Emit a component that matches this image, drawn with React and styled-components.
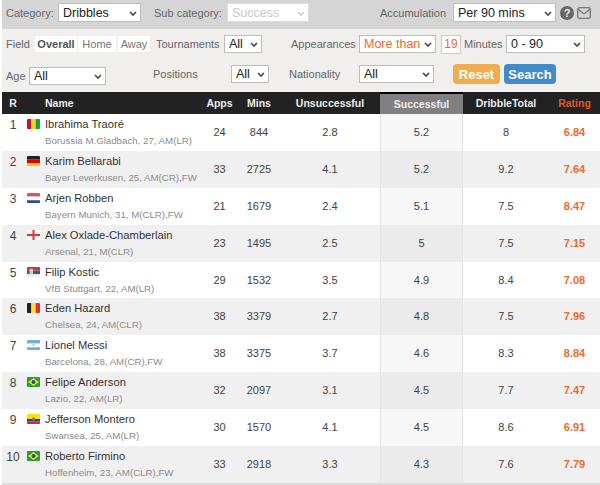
import React from 'react';
import styled, { createGlobalStyle } from 'styled-components';

const Global = createGlobalStyle`
  html, body { margin: 0; padding: 0; background: #fff; }
  body { font-family: "Liberation Sans", Arial, sans-serif; width: 600px; height: 485px; overflow: hidden; }
`;

const Page = styled.div`
  margin-left: 2px;
  width: 598px;
`;

const TopBar = styled.div`
  height: 29px;
  background: #d5d5d5;
  display: flex;
  align-items: center;
  padding: 0 0 4px 4px;
  box-sizing: border-box;
`;

const Filters = styled.div`
  height: 63px;
  background: #f0efee;
  display: flex;
  flex-direction: column;
  padding: 6px 0 0 4px;
  box-sizing: border-box;
`;

const FilterRow = styled.div`
  display: flex;
  align-items: center;
  height: ${p => p.$h}px;
  margin-bottom: ${p => p.$mb || 0}px;
`;

const Label = styled.span`
  font-size: 11px;
  color: #666;
  width: ${p => p.$w}px;
  margin-left: ${p => p.$ml || 0}px;
  margin-top: ${p => p.$mt || 0}px;
  white-space: nowrap;
`;

const SelectBox = styled.span`
  position: relative;
  display: block;
  width: ${p => p.$w}px;
  height: ${p => p.$h || 18}px;
  margin-top: ${p => p.$mt || 0}px;
`;

const Select = styled.select`
  appearance: none;
  display: block;
  width: 100%;
  height: 100%;
  box-sizing: border-box;
  border: 1px solid #bdbdbd;
  border-radius: 0;
  background: #fff;
  color: ${p => (p.$accent ? '#f2692a' : '#222')};
  font: 12.5px "Liberation Sans", Arial, sans-serif;
  padding: 0 0 0 4px;
  outline: none;
  &:disabled {
    color: #c8c8c8;
    opacity: 1;
    border-color: #ddd;
  }
`;

const Chevron = styled.svg`
  position: absolute;
  right: 4px;
  top: 50%;
  margin-top: -2px;
  pointer-events: none;
`;

const Tab = styled.span`
  font-size: 11px;
  font-weight: ${p => (p.$active ? 'bold' : 'normal')};
  color: ${p => (p.$active ? '#555' : '#777')};
  background: #fff;
  width: ${p => p.$w}px;
  height: 16px;
  line-height: 16px;
  text-align: center;
  margin-left: ${p => p.$ml || 0}px;
  border-radius: 2px;
`;

const NumberBox = styled.span`
  width: 20px;
  height: 19px;
  line-height: 17px;
  margin-left: ${p => p.$ml || 0}px;
  box-sizing: border-box;
  border: 1px solid #ccc;
  background: #fff;
  color: #f2692a;
  font-size: 12px;
  text-align: center;
`;

const Action = styled.button`
  width: ${p => p.$w}px;
  height: 20px;
  margin-left: ${p => p.$ml || 0}px;
  padding: 0;
  border: 0;
  border-radius: 4px;
  background: ${p => p.$bg};
  color: #fff;
  font: bold 13px "Liberation Sans", Arial, sans-serif;
`;

const HelpIcon = styled.span`
  width: 14px;
  height: 14px;
  margin-left: 4px;
  border-radius: 50%;
  background: #666;
  color: #eee;
  font-size: 11px;
  font-weight: bold;
  line-height: 14px;
  text-align: center;
`;

const MailIcon = styled.svg`
  margin-left: 3px;
  display: block;
`;

const columns = '22px 21px 159px 31px 48px 97px 83px 86px 51px';

const HeadRow = styled.div`
  display: grid;
  grid-template-columns: ${columns};
  height: 22px;
  background: #222;
  color: #eee;
  font-size: 10.5px;
  font-weight: bold;
  border-bottom: 1px solid #999;
  box-sizing: content-box;
  margin-bottom: -1px;
`;

const HeadCell = styled.div`
  line-height: 22px;
  text-align: center;
  color: ${p => p.$color || 'inherit'};
`;

const NameHead = styled(HeadCell)`
  grid-column: span 2;
  text-align: left;
  padding-left: 21px;
`;

const UnsuccessfulHead = styled(HeadCell)`
  padding-right: 3px;
`;

const ActiveHead = styled(HeadCell)`
  margin-top: 2px;
  line-height: 20px;
  background: #808080;
  box-shadow: 0 -2px 0 #000;
  color: #eee;
`;

const Row = styled.div`
  display: grid;
  grid-template-columns: ${columns};
  height: 36.9px;
  background: ${p => (p.$even ? '#f0f0f0' : '#fff')};
  color: #444;
  font-size: 11px;
`;

const Cell = styled.div`
  text-align: center;
  line-height: 24px;
  padding-top: 6px;
`;

const UnsuccessfulCell = styled(Cell)`
  padding-right: 3px;
`;

const Rank = styled.div`
  text-align: center;
  font-size: 12px;
  line-height: 20px;
  padding-top: 1px;
`;

const FlagCell = styled.div`
  padding: 5px 0 0 3px;
`;

const Flag = styled.svg`
  display: block;
  border-radius: 1px;
`;

const NameCell = styled.div`
  padding-top: 3px;
  white-space: nowrap;
`;

const PlayerName = styled.div`
  font-size: 11.2px;
  line-height: 15px;
  color: #333;
`;

const Meta = styled.div`
  font-size: 9.7px;
  line-height: 12px;
  margin-top: 3px;
  color: #8c8c8c;
`;

const SuccessCell = styled(Cell)`
  background: ${p => (p.$even ? '#ebebeb' : '#f7f7f7')};
  border-left: 1px solid #e6e6e6;
  border-right: 1px solid #e6e6e6;
`;

const Rating = styled(Cell)`
  color: #f2692a;
  font-weight: bold;
`;

const BottomLine = styled.div`
  height: 2px;
  background: #ddd;
`;

const FLAGS = {
  guinea: <><rect width="5" height="11" fill="#ce1126" /><rect x="5" width="5" height="11" fill="#fcd116" /><rect x="10" width="5" height="11" fill="#14a04a" /></>,
  germany: <><rect width="15" height="4" fill="#222" /><rect y="4" width="15" height="4" fill="#d00" /><rect y="8" width="15" height="3" fill="#f5c400" /></>,
  netherlands: <><rect width="15" height="4" fill="#e0505f" /><rect y="4" width="15" height="4" fill="#fff" /><rect y="8" width="15" height="3" fill="#2a4a94" /></>,
  england: <><rect width="15" height="11" fill="#fff" /><rect x="6.3" width="2.4" height="11" fill="#d8383f" /><rect y="4.3" width="15" height="2.4" fill="#d8383f" /></>,
  serbia: <><rect width="15" height="4" fill="#c6363c" /><rect y="4" width="15" height="4" fill="#2f5a9e" /><rect y="8" width="15" height="3" fill="#f2f2f2" /><rect x="3" y="2" width="4" height="6" rx="1" fill="#e9c9a0" /></>,
  belgium: <><rect width="5" height="11" fill="#222" /><rect x="5" width="5" height="11" fill="#fae042" /><rect x="10" width="5" height="11" fill="#ed2939" /></>,
  argentina: <><rect width="15" height="4" fill="#74acdf" /><rect y="4" width="15" height="4" fill="#fff" /><rect y="8" width="15" height="3" fill="#74acdf" /><circle cx="7.5" cy="5.5" r="1.2" fill="#f6b40e" /></>,
  brazil: <><rect width="15" height="11" fill="#229e45" /><path d="M7.5 1.2 13.6 5.5 7.5 9.8 1.4 5.5Z" fill="#f8e509" /><circle cx="7.5" cy="5.5" r="2.3" fill="#2b49a3" /></>,
  ecuador: <><rect width="15" height="5.5" fill="#ffdd00" /><rect y="5.5" width="15" height="2.75" fill="#034ea2" /><rect y="8.25" width="15" height="2.75" fill="#ed1c24" /><circle cx="7.5" cy="5.5" r="1.8" fill="#8a7a4a" /></>,
};

const PLAYERS = [
  [1, 'guinea', 'Ibrahima Traoré', 'Borussia M.Gladbach, 27, AM(LR)', 24, 844, '2.8', '5.2', '8', '6.84'],
  [2, 'germany', 'Karim Bellarabi', 'Bayer Leverkusen, 25, AM(CR),FW', 33, 2725, '4.1', '5.2', '9.2', '7.64'],
  [3, 'netherlands', 'Arjen Robben', 'Bayern Munich, 31, M(CLR),FW', 21, 1679, '2.4', '5.1', '7.5', '8.47'],
  [4, 'england', 'Alex Oxlade-Chamberlain', 'Arsenal, 21, M(CLR)', 23, 1495, '2.5', '5', '7.5', '7.15'],
  [5, 'serbia', 'Filip Kostic', 'VfB Stuttgart, 22, AM(LR)', 29, 1532, '3.5', '4.9', '8.4', '7.08'],
  [6, 'belgium', 'Eden Hazard', 'Chelsea, 24, AM(CLR)', 38, 3379, '2.7', '4.8', '7.5', '7.96'],
  [7, 'argentina', 'Lionel Messi', 'Barcelona, 28, AM(CR),FW', 38, 3375, '3.7', '4.6', '8.3', '8.84'],
  [8, 'brazil', 'Felipe Anderson', 'Lazio, 22, AM(LR)', 32, 2097, '3.1', '4.5', '7.7', '7.47'],
  [9, 'ecuador', 'Jefferson Montero', 'Swansea, 25, AM(LR)', 30, 1570, '4.1', '4.5', '8.6', '6.91'],
  [10, 'brazil', 'Roberto Firmino', 'Hoffenheim, 23, AM(CLR),FW', 33, 2918, '3.3', '4.3', '7.6', '7.79'],
];

const Dropdown = ({ value, w, h, mt, accent, disabled }) => (
  <SelectBox $w={w} $h={h} $mt={mt}>
    <Select defaultValue={value} $accent={accent} disabled={disabled}>
      <option>{value}</option>
    </Select>
    <Chevron width="8" height="5" viewBox="0 0 8 5">
      <path d="M1 1l3 3 3-3" fill="none" stroke={disabled ? '#ccc' : '#444'} strokeWidth="1.6" />
    </Chevron>
  </SelectBox>
);

export default function App() {
  return (
    <Page>
      <Global />
      <TopBar>
        <Label $w={52}>Category:</Label>
        <Dropdown value="Dribbles" w={83} h={19} />
        <Label $w={73} $ml={13}>Sub category:</Label>
        <Dropdown value="Success" w={82} h={19} disabled />
        <Label $w={73} $ml={71}>Accumulation</Label>
        <Dropdown value="Per 90 mins" w={103} h={19} />
        <HelpIcon>?</HelpIcon>
        <MailIcon width="14" height="12" viewBox="0 0 14 12">
          <rect x="0.7" y="0.7" width="12.6" height="10.6" rx="2" fill="none" stroke="#777" strokeWidth="1.3" />
          <path d="M1 2l6 5 6-5" fill="none" stroke="#777" strokeWidth="1.2" />
        </MailIcon>
      </TopBar>
      <Filters>
        <FilterRow $h={18} $mb={11}>
          <Label $w={29}>Field</Label>
          <Tab $active $w={42}>Overall</Tab>
          <Tab $w={38} $ml={1}>Home</Tab>
          <Tab $w={32} $ml={2}>Away</Tab>
          <Label $w={68} $ml={6}>Tournaments</Label>
          <Dropdown value="All" w={38} />
          <Label $w={68} $ml={29}>Appearances</Label>
          <Dropdown value="More than" w={77} accent />
          <NumberBox $ml={5}>19</NumberBox>
          <Label $w={42} $ml={3}>Minutes</Label>
          <Dropdown value="0 - 90" w={79} />
        </FilterRow>
        <FilterRow $h={20}>
          <Label $w={23} $mt={4}>Age</Label>
          <Dropdown value="All" w={77} mt={4} />
          <Label $w={78} $ml={47}>Positions</Label>
          <Dropdown value="All" w={38} />
          <Label $w={70} $ml={20}>Nationality</Label>
          <Dropdown value="All" w={75} />
          <Action $w={47} $ml={19} $bg="#f0ad4e">Reset</Action>
          <Action $w={52} $ml={4} $bg="#428bca">Search</Action>
        </FilterRow>
      </Filters>
      <HeadRow>
        <HeadCell>R</HeadCell>
        <NameHead>Name</NameHead>
        <HeadCell>Apps</HeadCell>
        <HeadCell>Mins</HeadCell>
        <UnsuccessfulHead>Unsuccessful</UnsuccessfulHead>
        <ActiveHead>Successful</ActiveHead>
        <HeadCell>DribbleTotal</HeadCell>
        <HeadCell $color="#e2571e">Rating</HeadCell>
      </HeadRow>
      {PLAYERS.map(([rank, flag, name, meta, apps, mins, unsuccessful, successful, total, rating]) => {
        const even = rank % 2 === 0;
        return (
          <Row key={rank} $even={even}>
            <Rank>{rank}</Rank>
            <FlagCell>
              <Flag width="13" height="10" viewBox="0 0 15 11" preserveAspectRatio="none">{FLAGS[flag]}</Flag>
            </FlagCell>
            <NameCell>
              <PlayerName>{name}</PlayerName>
              <Meta>{meta}</Meta>
            </NameCell>
            <Cell>{apps}</Cell>
            <Cell>{mins}</Cell>
            <UnsuccessfulCell>{unsuccessful}</UnsuccessfulCell>
            <SuccessCell $even={even}>{successful}</SuccessCell>
            <Cell>{total}</Cell>
            <Rating>{rating}</Rating>
          </Row>
        );
      })}
      <BottomLine />
    </Page>
  );
}
